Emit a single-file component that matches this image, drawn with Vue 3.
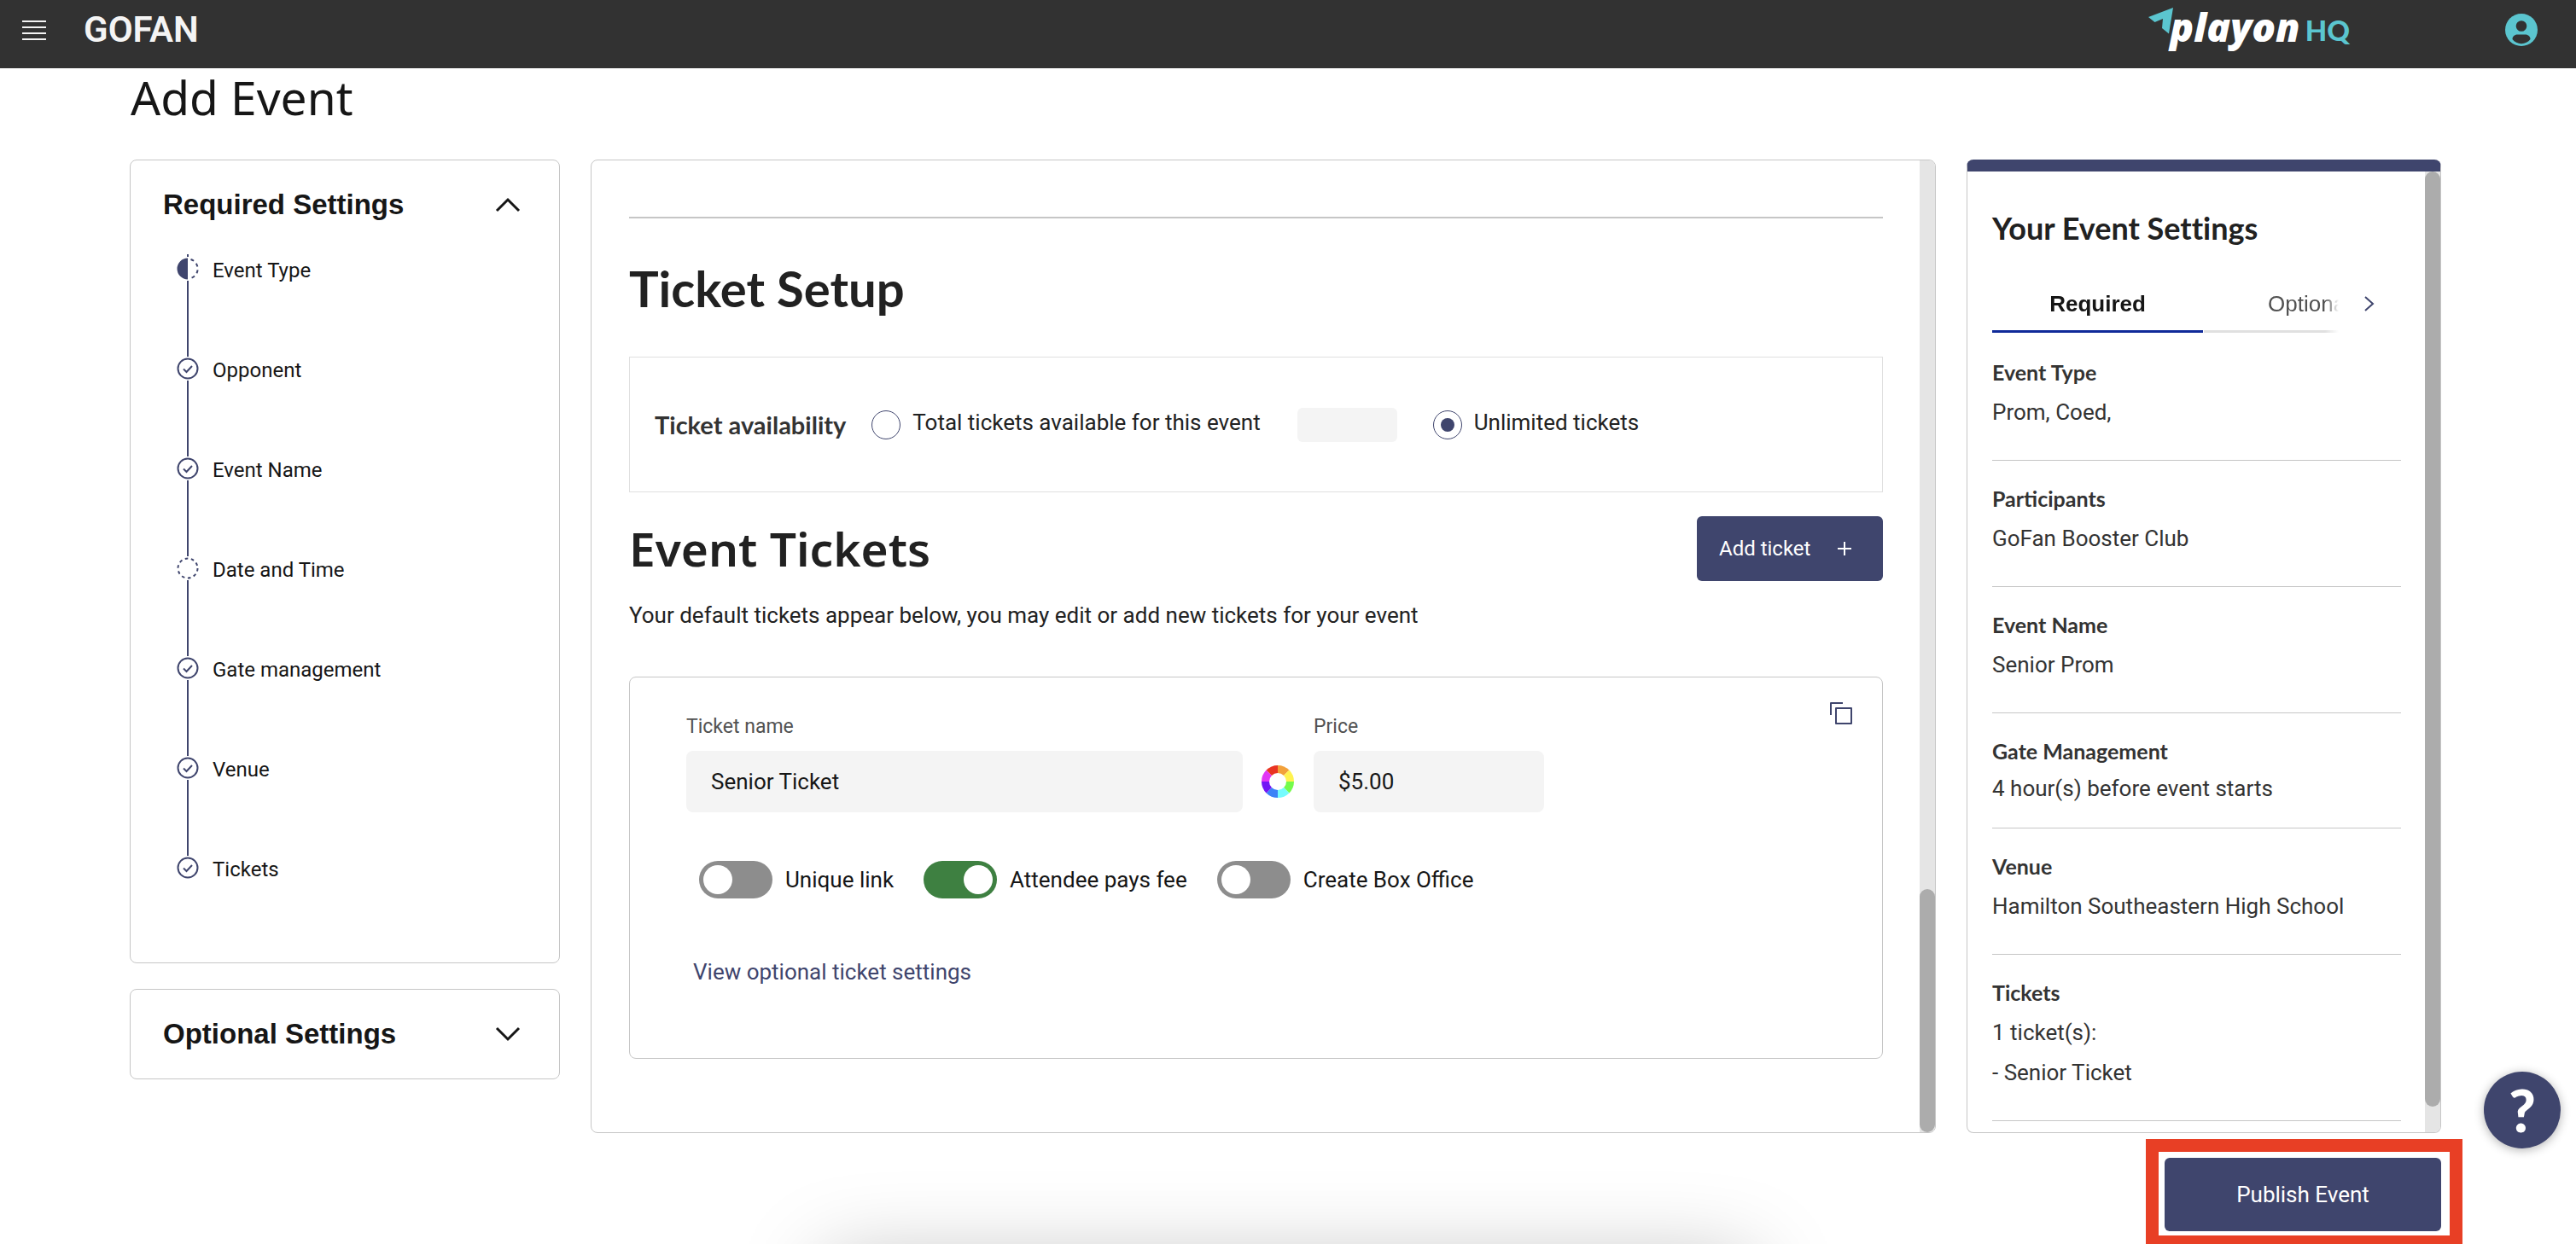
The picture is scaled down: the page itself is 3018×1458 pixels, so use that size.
<script setup>
import { ref } from 'vue'

const steps = [
  { name: 'Event Type', state: 'half' },
  { name: 'Opponent', state: 'done' },
  { name: 'Event Name', state: 'done' },
  { name: 'Date and Time', state: 'empty' },
  { name: 'Gate management', state: 'done' },
  { name: 'Venue', state: 'done' },
  { name: 'Tickets', state: 'done' }
]

const summary = [
  { title: 'Event Type', lines: ['Prom, Coed,'] },
  { title: 'Participants', lines: ['GoFan Booster Club'] },
  { title: 'Event Name', lines: ['Senior Prom'] },
  { title: 'Gate Management', lines: ['4 hour(s) before event starts'], tight: true },
  { title: 'Venue', lines: ['Hamilton Southeastern High School'] },
  { title: 'Tickets', lines: ['1 ticket(s):', '- Senior Ticket'] }
]

const availability = ref('unlimited')
const total = ref('')
const ticketName = ref('Senior Ticket')
const price = ref('$5.00')
const toggles = ref([
  { id: 'unique-link', label: 'Unique link', on: false },
  { id: 'attendee-fee', label: 'Attendee pays fee', on: true },
  { id: 'box-office', label: 'Create Box Office', on: false }
])
</script>

<template>
  <div class="page">
    <header class="topbar">
      <button class="icon-btn menu" aria-label="Open menu">
        <svg width="28" height="24" viewBox="0 0 28 24" stroke="#f4f4f4" stroke-width="2">
          <path d="M0 2h28M0 9h28M0 16h28M0 23h28" />
        </svg>
      </button>
      <span class="brand">GOFAN</span>
      <a class="logo" href="#">
        <svg width="29" height="31" viewBox="0 0 29 31" fill="#5bc5cf">
          <path d="M0 11 29 0 24 30.500 16 24 17 13 7.500 17z" />
        </svg>
        <span class="logo-play">playon</span>
        <span class="logo-hq">HQ</span>
      </a>
      <button class="icon-btn" aria-label="Account">
        <svg width="38" height="38" viewBox="0 0 38 38">
          <circle cx="19" cy="19" r="19" fill="#5bc5cf" />
          <circle cx="19" cy="14.500" r="6.300" fill="#323232" />
          <path d="M8.500 30c0-4 3.500-5.500 6-5.500h9c2.500 0 6 1.500 6 5.500-2.500 3.200-6.300 5.200-10.500 5.200S11 33.200 8.500 30z" fill="#323232" />
        </svg>
      </button>
    </header>

    <h1 class="page-title">Add Event</h1>

    <main class="columns">
      <nav class="side">
        <section class="card side-card side-required">
          <button class="side-head">
            Required Settings
            <svg width="30" height="18" viewBox="0 0 30 18" fill="none" stroke="#161616" stroke-width="3">
              <path d="M2 16 15 3l13 13" />
            </svg>
          </button>
          <ul class="steps">
            <li v-for="step in steps" :key="step.name" class="step">
              <div class="rail">
                <svg width="28" height="28" viewBox="0 0 28 28" fill="none" stroke="#3f456d" stroke-width="2">
                  <template v-if="step.state === 'done'">
                    <circle cx="14" cy="14" r="11.500" />
                    <path d="m9 14.500 3.500 3.500 6.500-7" />
                  </template>
                  <template v-else-if="step.state === 'half'">
                    <path d="M14 1.500a12.500 12.500 0 0 0 0 25z" fill="#3f456d" stroke="none" />
                    <path d="M17.500 3a11.500 11.500 0 0 1 0 22" stroke-dasharray="4 4" />
                  </template>
                  <circle v-else cx="14" cy="14" r="11.500" stroke-dasharray="3.600 3.620" />
                </svg>
              </div>
              <a class="step-name" href="#">{{ step.name }}</a>
            </li>
          </ul>
        </section>
        <section class="card side-card">
          <button class="side-head">
            Optional Settings
            <svg width="30" height="18" viewBox="0 0 30 18" fill="none" stroke="#161616" stroke-width="3">
              <path d="m2 2 13 13L28 2" />
            </svg>
          </button>
        </section>
      </nav>

      <section class="card editor">
        <div class="editor-body">
          <hr class="rule" />
          <h2 class="setup-title">Ticket Setup</h2>
          <div class="availability" role="radiogroup" aria-labelledby="availability-title">
            <strong id="availability-title" class="availability-title">Ticket availability</strong>
            <input id="limited" v-model="availability" class="radio" type="radio" name="availability" value="limited" />
            <label class="radio-label" for="limited">Total tickets available for this event</label>
            <input v-model="total" class="total" type="text" aria-label="Total tickets" />
            <input id="unlimited" v-model="availability" class="radio" type="radio" name="availability" value="unlimited" />
            <label class="radio-label" for="unlimited">Unlimited tickets</label>
          </div>

          <div class="tickets-head">
            <h2 class="tickets-title">Event Tickets</h2>
            <button class="primary add">
              Add ticket
              <svg width="16" height="16" viewBox="0 0 16 16" stroke="#fff" stroke-width="2">
                <path d="M8 0v16M0 8h16" />
              </svg>
            </button>
          </div>
          <p class="hint">Your default tickets appear below, you may edit or add new tickets for your event</p>

          <article class="card ticket">
            <div class="ticket-form">
              <div class="fields">
                <div class="field field-name">
                  <label for="ticket-name">Ticket name</label>
                  <input id="ticket-name" v-model="ticketName" type="text" />
                </div>
                <button class="icon-btn wheel" aria-label="Ticket color">
                  <svg width="38" height="38" viewBox="-19 -19 38 38">
                    <path d="M0 0V-19A19 19 0 0 1 13.435-13.435z" fill="#f2a13b" />
                    <path d="M0 0 13.435-13.435A19 19 0 0 1 19 0z" fill="#fff350" />
                    <path d="M0 0H19A19 19 0 0 1 13.435 13.435z" fill="#75fb4c" />
                    <path d="M0 0 13.435 13.435A19 19 0 0 1 0 19z" fill="#75fbfd" />
                    <path d="M0 0V19A19 19 0 0 1-13.435 13.435z" fill="#3c82f7" />
                    <path d="M0 0-13.435 13.435A19 19 0 0 1-19 0z" fill="#7316f5" />
                    <path d="M0 0H-19A19 19 0 0 1-13.435-13.435z" fill="#e135f5" />
                    <path d="M0 0-13.435-13.435A19 19 0 0 1 0-19z" fill="#e93423" />
                    <circle r="10" fill="#fff" />
                  </svg>
                </button>
                <div class="field field-price">
                  <label for="ticket-price">Price</label>
                  <input id="ticket-price" v-model="price" type="text" />
                </div>
              </div>
              <div class="toggles">
                <label v-for="t in toggles" :key="t.id" class="toggle" :for="t.id">
                  <input :id="t.id" v-model="t.on" type="checkbox" role="switch" />
                  {{ t.label }}
                </label>
              </div>
              <a class="more" href="#">View optional ticket settings</a>
            </div>
            <button class="icon-btn copy" aria-label="Duplicate ticket">
              <svg width="26" height="26" viewBox="0 0 26 26" fill="none" stroke="#3f456d" stroke-width="2" stroke-linejoin="round">
                <rect x="7" y="7" width="18" height="18" />
                <path d="M1 15V1h14" />
              </svg>
            </button>
          </article>
        </div>
        <div class="track"><div class="thumb thumb-low"></div></div>
      </section>

      <aside class="card settings">
        <div class="settings-body">
          <h2 class="settings-title">Your Event Settings</h2>
          <div class="tabs">
            <div class="tab-list" role="tablist">
              <button class="tab active" role="tab" aria-selected="true">Required</button>
              <button class="tab" role="tab" aria-selected="false">Optional</button>
            </div>
            <button class="icon-btn next" aria-label="Next tabs">
              <svg width="12" height="18" viewBox="0 0 12 18" fill="none" stroke="#3f456d" stroke-width="2">
                <path d="m1 1 9 8-9 8" />
              </svg>
            </button>
          </div>
          <section v-for="item in summary" :key="item.title" class="item" :class="{ tight: item.tight }">
            <h3>{{ item.title }}</h3>
            <p v-for="line in item.lines" :key="line">{{ line }}</p>
          </section>
        </div>
        <div class="track"><div class="thumb thumb-high"></div></div>
      </aside>
    </main>

    <footer class="actions">
      <div class="highlight">
        <button class="primary publish">Publish Event</button>
      </div>
    </footer>

    <button class="help" aria-label="Help">?</button>
    <div class="dock-shadow"></div>
  </div>
</template>

<style>
body {
  margin: 0;
  background: #fff;
}
</style>

<style scoped>
.page {
  position: relative;
  height: 100vh;
  overflow: hidden;
  color: #161616;
  font-family: Roboto, "Noto Sans", sans-serif;
  font-size: 26px;
  line-height: 36px;
}
.page *,
.page *::before {
  box-sizing: border-box;
}
h1,
h2,
h3,
p,
ul {
  margin: 0;
  padding: 0;
}
button,
input {
  font: inherit;
  color: inherit;
  border: 0;
  margin: 0;
  padding: 0;
}
a {
  color: inherit;
  text-decoration: none;
}
svg {
  display: block;
  flex: none;
}
.icon-btn {
  background: none;
  flex: none;
}
.card {
  border: 1px solid #c6c6c6;
  border-radius: 8px;
  background: #fff;
}

.topbar {
  display: flex;
  align-items: center;
  height: 80px;
  padding: 0 45px 10px 26px;
  background: #323232;
}
.brand {
  margin-left: 44px;
  color: #f4f4f4;
  font-size: 42px;
  font-weight: 600;
}
.logo {
  display: flex;
  margin-left: auto;
  margin-right: 182px;
}
.logo svg {
  margin-top: 6px;
}
.logo-play {
  margin-left: -4px;
  color: #fff;
  font-family: "Open Sans", sans-serif;
  font-size: 46px;
  line-height: 56px;
  font-weight: 800;
  font-style: italic;
}
.logo-hq {
  margin-left: 6px;
  color: #5bc5cf;
  font-family: Lato, sans-serif;
  font-size: 33px;
  line-height: 64px;
  font-weight: 900;
}

.page-title {
  margin: 2px 0 41px 153px;
  font-family: "Noto Sans", sans-serif;
  font-size: 55px;
  line-height: 64px;
  font-weight: 400;
}
.columns {
  display: grid;
  grid-template-columns: 504fr 1576fr 556fr;
  gap: 36px;
  padding: 0 158px 0 152px;
}

.side {
  display: flex;
  flex-direction: column;
  gap: 30px;
}
.side-card {
  padding: 32px 45px 32px 38px;
}
.side-required {
  padding-bottom: 93px;
}
.side-head {
  display: flex;
  justify-content: space-between;
  align-items: center;
  width: 100%;
  background: none;
  font-family: "Liberation Sans", Arial, sans-serif;
  font-size: 33px;
  line-height: 40px;
  font-weight: 700;
}
.steps {
  margin: 38px 0 0 15px;
  list-style: none;
}
.steps::before {
  content: "";
  display: block;
  width: 2px;
  height: 3px;
  margin-left: 13px;
  background: #3f456d;
}
.step {
  display: flex;
  gap: 15px;
  min-height: 117px;
  font-size: 24px;
  line-height: 32px;
}
.step:last-child {
  min-height: 28px;
}
.rail {
  display: flex;
  flex-direction: column;
  align-items: center;
}
.step:not(:last-child) .rail::after {
  content: "";
  flex: 1;
  width: 2px;
  background: #3f456d;
}

.editor,
.settings {
  display: flex;
  overflow: hidden;
}
.editor-body {
  flex: 1;
  padding: 66px 43px 86px 44px;
}
.track {
  display: flex;
  flex-direction: column;
  width: 18px;
  background: #e5e5e5;
}
.thumb {
  border-radius: 9px;
  background: #acacac;
}
.thumb-low {
  height: 25%;
  margin-top: auto;
}
.thumb-high {
  flex: 1;
  margin-bottom: 30px;
}
.rule {
  height: 2px;
  margin: 0;
  border: 0;
  background: #c6c6c6;
}
.setup-title,
.tickets-title {
  color: #212121;
  font-family: Lato, sans-serif;
  font-size: 58px;
  line-height: 64px;
  font-weight: 700;
}
.setup-title {
  margin: 50px 0 48px;
}
.availability {
  display: flex;
  align-items: center;
  height: 159px;
  padding: 0 29px;
  border: 1px solid #e0e0e0;
  color: #212121;
}
.availability-title {
  margin-right: 30px;
  color: #333;
  font-family: Lato, sans-serif;
  font-size: 29px;
}
.radio {
  display: grid;
  place-items: center;
  flex: none;
  width: 34px;
  height: 34px;
  border: 1px solid #3f456d;
  border-radius: 50%;
  appearance: none;
}
.radio:checked::before {
  content: "";
  width: 16px;
  height: 16px;
  border-radius: 50%;
  background: #3f456d;
}
.radio-label {
  padding: 0 0 6px 14px;
}
.total {
  width: 117px;
  height: 40px;
  margin: 0 42px 0 43px;
  border-radius: 6px;
  background: #f4f4f4;
}
.tickets-head {
  display: flex;
  justify-content: space-between;
  align-items: center;
  margin-top: 28px;
}
.tickets-title {
  font-family: "Noto Sans", sans-serif;
  font-size: 55px;
  font-weight: 600;
}
.primary {
  border-radius: 6px;
  background: #3f456d;
  color: #fff;
}
.add {
  display: flex;
  justify-content: space-between;
  align-items: center;
  width: 218px;
  height: 76px;
  padding: 0 37px 0 26px;
  font-size: 24px;
}
.hint {
  margin: 22px 0 54px;
  color: #212121;
}
.ticket {
  display: flex;
  justify-content: space-between;
  align-items: flex-start;
  padding: 29px 35px 83px 66px;
}
.ticket-form {
  flex: 1;
  padding-top: 14px;
}
.fields {
  display: flex;
  align-items: flex-end;
}
.field {
  display: flex;
  flex-direction: column;
  gap: 13px;
}
.field-name {
  width: 652px;
}
.field-price {
  width: 270px;
}
.field label {
  color: #525252;
  font-size: 23px;
  line-height: 30px;
}
.field input {
  width: 100%;
  height: 72px;
  padding: 0 29px;
  border-radius: 8px;
  background: #f4f4f4;
}
.wheel {
  margin: 0 23px 17px 22px;
}
.toggles {
  display: flex;
  gap: 35px;
  margin: 57px 0 68px 15px;
}
.toggle {
  display: flex;
  align-items: center;
  gap: 15px;
}
.toggle input {
  display: flex;
  align-items: center;
  width: 86px;
  height: 44px;
  padding: 0 5px;
  border-radius: 22px;
  background: #8d8d8d;
  appearance: none;
}
.toggle input::before {
  content: "";
  width: 34px;
  height: 34px;
  border-radius: 50%;
  background: #fff;
}
.toggle input:checked {
  justify-content: flex-end;
  background: #3e8041;
}
.more {
  display: block;
  margin-left: 8px;
  color: #3f456d;
}

.settings {
  border-top: 14px solid #3f456d;
}
.settings-body {
  flex: 1;
  min-width: 0;
  padding: 44px 28px 12px 29px;
  color: #333;
}
.settings-title {
  color: #212121;
  font-family: Lato, sans-serif;
  font-size: 36px;
  line-height: 44px;
  font-weight: 700;
  font-variant-ligatures: none;
}
.tabs {
  display: flex;
  align-items: center;
  gap: 30px;
  margin: 49px 0 2px;
}
.tab-list {
  display: flex;
  gap: 1px;
  width: 406px;
  overflow: hidden;
  -webkit-mask-image: linear-gradient(to left, transparent, #000 16px);
  mask-image: linear-gradient(to left, transparent, #000 16px);
}
.tab {
  flex: none;
  width: 247px;
  padding-bottom: 13px;
  border-bottom: 3px solid #e0e0e0;
  background: none;
  color: #525252;
  font-family: "Liberation Sans", Arial, sans-serif;
}
.tab.active {
  border-color: #0f2a99;
  color: #161616;
  font-weight: 700;
}
.next {
  padding-bottom: 16px;
}
.item {
  display: flex;
  flex-direction: column;
  gap: 11px;
  padding: 26px 0 38px;
  border-bottom: 1px solid #c6c6c6;
}
.item.tight {
  gap: 8px;
  padding-bottom: 28px;
}
.item h3 {
  font-family: Lato, sans-serif;
  font-size: 25px;
  font-weight: 700;
}

.actions {
  display: flex;
  justify-content: flex-end;
  padding: 7px 133px 0 0;
}
.highlight {
  padding: 7px 10px 5px 7px;
  border: 15px solid #e83f25;
  background: #fff;
}
.publish {
  display: block;
  width: 324px;
  height: 86px;
}
.help {
  position: absolute;
  right: 18px;
  bottom: 112px;
  width: 90px;
  height: 90px;
  border-radius: 50%;
  background: #3f456d;
  box-shadow: 0 2px 12px rgba(0, 0, 0, 0.3);
  color: #fff;
  font-family: Lato, sans-serif;
  font-size: 68px;
  font-weight: 900;
}
.dock-shadow {
  position: absolute;
  top: calc(100% + 20px);
  left: 32%;
  right: 32%;
  height: 100px;
  box-shadow: 0 0 100px rgba(0, 0, 0, 0.26);
  pointer-events: none;
}
</style>
